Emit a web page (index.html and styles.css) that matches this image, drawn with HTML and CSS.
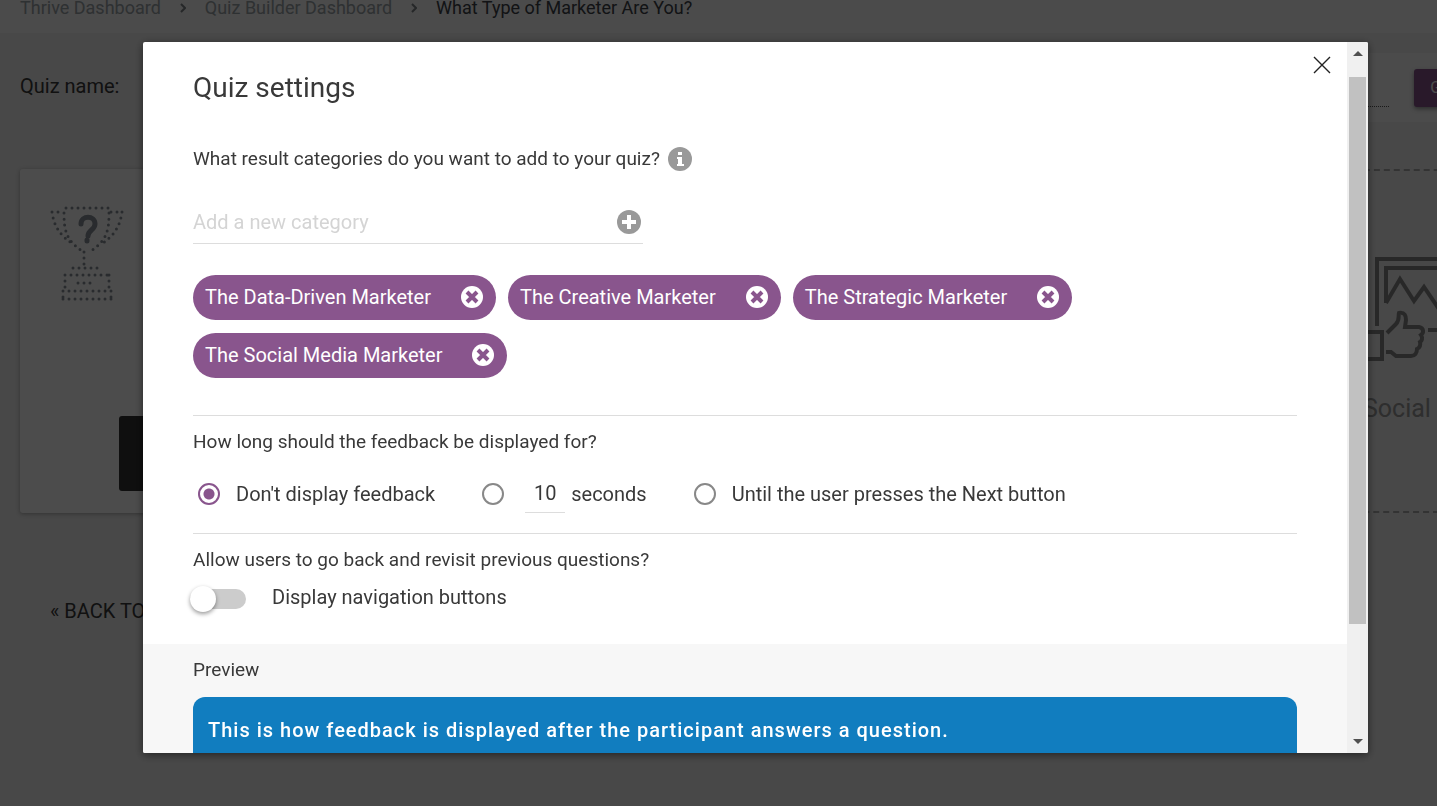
FILE: index.html
```html
<!DOCTYPE html>
<html lang="en">
<head>
    <meta charset="UTF-8">
    <meta name="viewport" content="width=device-width, initial-scale=1.0">
    <title>Quiz Builder</title>
    <link rel="stylesheet" href="styles.css">
</head>
<body>
    <nav class="breadcrumbs">
        <a href="#">Thrive Dashboard</a>
        <svg class="chevron" viewBox="0 0 6 10"><path d="M1 1l4 4-4 4"/></svg>
        <a href="#">Quiz Builder Dashboard</a>
        <svg class="chevron" viewBox="0 0 6 10"><path d="M1 1l4 4-4 4"/></svg>
        <span class="current">What Type of Marketer Are You?</span>
    </nav>

    <div class="quiz-bar">
        <label for="quizName">Quiz name:</label>
        <div class="quiz-bar-field">
            <input type="text" id="quizName">
            <button class="general-btn">General settings</button>
        </div>
    </div>

    <div class="cards">
        <section class="card">
            <svg class="trophy" viewBox="0 0 74 96">
                <g class="dots">
                    <path d="M16 2h44M14 7c0 17 2 27 18 38M59 7c0 17-2 27-18 38"/>
                    <path d="M2 6h10M61 6h12M2 6c2 15 9 25 23 33M72 6c-2 15-9 25-22 33"/>
                    <path d="M34 46v16M23 62h30M15 69h46M15 69v14M59 69v14M28 77h18M13 85h50M13 93h50M13 85v8M61 85v8"/>
                </g>
                <path class="mark" d="M31 18c0-9 14-9 14 0 0 6-7 6-7 12M37 34v1"/>
            </svg>
            <button class="manage-btn" aria-label="Manage"></button>
        </section>
        <section class="card card-empty">
            <svg class="badge-icon" viewBox="0 0 120 106">
                <path d="M14 69V2h100v71H65"/>
                <path d="M23 46V11h83v50L92 38l-14 17-17-25-10 14-14-22-14 24"/>
                <path d="M0 75h19v27H0"/>
                <path d="M24 76l9-9c4-4 2-8 3-11 6-1 7 3 7 7l-1 7h14c5 1 5 6 2 8 2 3 1 6-1 7 1 4-1 6-3 7 0 4-2 7-6 7H33l-5-4h-5"/>
            </svg>
            <h3>Social share badge</h3>
        </section>
    </div>

    <a class="back-link" href="#">« BACK TO DASHBOARD</a>

    <div class="overlay">
        <div class="modal" role="dialog" aria-labelledby="modalTitle">
            <div class="modal-content">
                <button class="close-btn" aria-label="Close">
                    <svg viewBox="0 0 18 18"><path d="M1 1l16 16M17 1L1 17"/></svg>
                </button>
                <div class="settings">
                    <h2 id="modalTitle">Quiz settings</h2>
                    <div class="question question-info">
                        <label for="newCategory">What result categories do you want to add to your quiz?</label>
                        <svg class="round-icon" viewBox="0 0 24 24">
                            <circle cx="12" cy="12" r="12"/>
                            <path d="M10 5h4v3h-4zM9 10h5v7h2v2H9v-2h1v-5H9z"/>
                        </svg>
                    </div>
                    <div class="category-field">
                        <input type="text" id="newCategory" placeholder="Add a new category">
                        <button class="add-btn" aria-label="Add category">
                            <svg class="round-icon" viewBox="0 0 24 24">
                                <circle cx="12" cy="12" r="12"/>
                                <path d="M10 5h4v5h5v4h-5v5h-4v-5H5v-4h5z"/>
                            </svg>
                        </button>
                    </div>
                    <ul class="tags">
                        <li>The Data-Driven Marketer
                            <button aria-label="Remove"><svg viewBox="0 0 22 22"><circle cx="11" cy="11" r="11"/><path d="M6 6l10 10M16 6L6 16"/></svg></button>
                        </li>
                        <li>The Creative Marketer
                            <button aria-label="Remove"><svg viewBox="0 0 22 22"><circle cx="11" cy="11" r="11"/><path d="M6 6l10 10M16 6L6 16"/></svg></button>
                        </li>
                        <li>The Strategic Marketer
                            <button aria-label="Remove"><svg viewBox="0 0 22 22"><circle cx="11" cy="11" r="11"/><path d="M6 6l10 10M16 6L6 16"/></svg></button>
                        </li>
                        <li>The Social Media Marketer
                            <button aria-label="Remove"><svg viewBox="0 0 22 22"><circle cx="11" cy="11" r="11"/><path d="M6 6l10 10M16 6L6 16"/></svg></button>
                        </li>
                    </ul>

                    <div class="group">
                        <p class="question">How long should the feedback be displayed for?</p>
                        <div class="options">
                            <label class="option"><input type="radio" name="feedback" checked> Don't display feedback</label>
                            <div class="option">
                                <input type="radio" name="feedback" id="timed" aria-label="Timed feedback">
                                <input type="text" class="seconds" id="seconds" value="10">
                                <label for="seconds">seconds</label>
                            </div>
                            <label class="option"><input type="radio" name="feedback"> Until the user presses the Next button</label>
                        </div>
                    </div>

                    <div class="group">
                        <p class="question">Allow users to go back and revisit previous questions?</p>
                        <label class="toggle"><input type="checkbox"> Display navigation buttons</label>
                    </div>
                </div>
                <div class="preview">
                    <p class="question">Preview</p>
                    <div class="feedback">This is how feedback is displayed after the participant answers a question.</div>
                </div>
            </div>
            <div class="scrollbar">
                <svg viewBox="0 0 10 5"><path d="M0 5l5-5 5 5z"/></svg>
                <div class="track"><div class="thumb"></div></div>
                <svg viewBox="0 0 10 5"><path d="M0 0l5 5 5-5z"/></svg>
            </div>
        </div>
    </div>
</body>
</html>
```
FILE: styles.css
```css
* {
    box-sizing: border-box;
}

body {
    margin: 0;
    min-height: 100vh;
    overflow: hidden;
    background-color: #f0f0f0;
    color: #393939;
    font-family: Roboto, sans-serif;
    font-size: 20px;
    line-height: 24px;
}

h2, h3, p, ul {
    margin: 0;
    padding: 0;
    font-weight: 400;
}

button, input {
    margin: 0;
    padding: 0;
    border: none;
    background: none;
    color: inherit;
    font: inherit;
}

button {
    cursor: pointer;
}

a {
    color: inherit;
    text-decoration: none;
}

svg {
    display: block;
    flex: none;
}

/* page behind the modal */
.breadcrumbs {
    display: flex;
    align-items: center;
    gap: 19px;
    height: 33px;
    padding: 0 20px 18px;
    background-color: #fafafa;
    color: #9ba3a8;
    font-size: 18px;
    white-space: nowrap;
}

.breadcrumbs .current {
    color: #3c4248;
}

.chevron {
    width: 6px;
    height: 10px;
    fill: none;
    stroke: #7d8388;
    stroke-width: 2;
}

.quiz-bar {
    display: flex;
    align-items: center;
    gap: 24px;
    margin-top: 20px;
    padding-left: 20px;
    white-space: nowrap;
}

.quiz-bar label {
    padding-bottom: 4px;
}

.quiz-bar-field {
    display: flex;
    flex: 1;
    align-items: center;
    gap: 25px;
    height: 69px;
    margin-right: -157px;
    padding-left: 20px;
    background-color: #fafafa;
}

.quiz-bar-field input {
    flex: 1;
    height: 38px;
    border-bottom: 1px dotted #555;
}

.general-btn {
    width: 180px;
    height: 38px;
    border-radius: 3px;
    background-color: #89558d;
    box-shadow: 0 2px 4px rgba(0, 0, 0, 0.4);
    color: #fff;
    font-size: 16px;
    text-transform: uppercase;
}

.cards {
    display: grid;
    grid-template-columns: 1fr 330px;
    gap: 20px;
    margin-top: 47px;
    margin-right: -234px;
    padding-left: 20px;
}

.card {
    display: flex;
    justify-content: space-between;
    height: 344px;
    padding: 37px 30px 22px;
    border-radius: 3px;
    background-color: #fff;
    box-shadow: 0 1px 4px rgba(0, 0, 0, 0.3);
}

.card-empty {
    flex-direction: column;
    justify-content: flex-start;
    padding: 86px 20px;
    border: 2px dashed #aaa;
    background: none;
    box-shadow: none;
    color: #999;
}

.card h3 {
    margin-top: 30px;
    font-size: 25px;
    line-height: 32px;
}

.trophy {
    width: 74px;
    height: 96px;
    fill: none;
    stroke: #8a9299;
    stroke-width: 3;
    stroke-linecap: round;
}

.dots {
    stroke-dasharray: 0 6;
}

.mark {
    stroke-width: 5;
}

.manage-btn {
    flex: 1;
    align-self: flex-end;
    height: 75px;
    margin-left: -5px;
    border-radius: 3px;
    background-color: #333;
}

.badge-icon {
    width: 120px;
    height: 106px;
    fill: none;
    stroke: #888;
    stroke-width: 4;
}

.back-link {
    display: inline-block;
    margin: 86px 50px 0;
}

/* modal */
.overlay {
    display: flex;
    position: fixed;
    inset: 0;
    padding: 42px 69px 53px 143px;
    background-color: rgba(0, 0, 0, 0.7);
}

.modal {
    display: flex;
    flex: 1;
    overflow: hidden;
    border-radius: 2px;
    background-color: #fff;
    box-shadow: 0 2px 8px rgba(0, 0, 0, 0.5);
}

.modal-content {
    position: relative;
    flex: 1;
    overflow: hidden;
}

.close-btn {
    position: absolute;
    top: 14px;
    right: 16px;
}

.close-btn svg {
    width: 18px;
    height: 18px;
    stroke: #222;
    stroke-width: 1.4;
}

.settings {
    padding: 29px 50px 35px;
}

.settings h2 {
    font-size: 28px;
    line-height: 34px;
}

.question {
    font-size: 19px;
}

.question-info {
    display: flex;
    align-items: center;
    gap: 8px;
    margin-top: 42px;
}

.round-icon {
    width: 24px;
    height: 24px;
    fill: #999;
}

.round-icon path {
    fill: #fff;
}

.category-field {
    display: flex;
    align-items: center;
    width: 450px;
    height: 44px;
    margin-top: 29px;
    padding-right: 2px;
    border-bottom: 1px solid #ddd;
}

.category-field input {
    flex: 1;
    height: 44px;
}

.category-field input::placeholder {
    color: #d4d4d4;
}

.tags {
    display: flex;
    flex-wrap: wrap;
    gap: 13px 12px;
    margin-top: 31px;
    list-style: none;
}

.tags li {
    display: flex;
    align-items: center;
    gap: 30px;
    height: 45px;
    padding: 0 13px 1px 12px;
    border-radius: 23px;
    background-color: #89558d;
    color: #fff;
}

.tags svg {
    width: 22px;
    height: 22px;
    fill: #fff;
    stroke: #89558d;
    stroke-width: 4;
}

.tags circle {
    stroke: none;
}

.group {
    margin-top: 37px;
    padding-top: 14px;
    border-top: 1px solid #ddd;
}

.group + .group {
    margin-top: 19px;
}

.options {
    display: flex;
    gap: 47px;
    margin-top: 20px;
    padding-left: 5px;
}

.option {
    display: flex;
    align-items: center;
    height: 40px;
}

.option input[type="radio"] {
    appearance: none;
    width: 22px;
    height: 22px;
    margin-right: 16px;
    border: 2px solid #888;
    border-radius: 50%;
}

.option input[type="radio"]:checked {
    border-color: #89558d;
    background: radial-gradient(circle, #89558d 5px, transparent 6px);
}

.option .seconds {
    width: 40px;
    height: 38px;
    margin: 0 6px 0 5px;
    padding-bottom: 2px;
    border-bottom: 1px solid #ddd;
    text-align: center;
}

.toggle {
    display: flex;
    align-items: flex-end;
    gap: 26px;
    margin-top: 13px;
    margin-left: -3px;
}

.toggle input {
    display: flex;
    align-items: center;
    appearance: none;
    width: 56px;
    height: 20px;
    border-radius: 10px;
    background-color: #ccc;
}

.toggle input::before {
    content: "";
    width: 26px;
    height: 26px;
    border-radius: 50%;
    background-color: #fff;
    box-shadow: 0 2px 4px rgba(0, 0, 0, 0.4);
}

.preview {
    padding: 14px 50px;
    background-color: #f7f7f7;
}

.feedback {
    margin-top: 15px;
    padding: 21px 15px 30px;
    border-radius: 12px;
    background-color: #117dbf;
    color: #fff;
    font-weight: 500;
    letter-spacing: 1px;
}

.scrollbar {
    display: flex;
    flex-direction: column;
    align-items: center;
    width: 21px;
    padding: 9px 2px;
    background-color: #f0f0f0;
}

.scrollbar svg {
    width: 10px;
    height: 5px;
    fill: #505050;
}

.track {
    flex: 1;
    width: 17px;
    margin: 21px 0 19px;
}

.thumb {
    height: 85%;
    background-color: #c1c1c1;
}
```
